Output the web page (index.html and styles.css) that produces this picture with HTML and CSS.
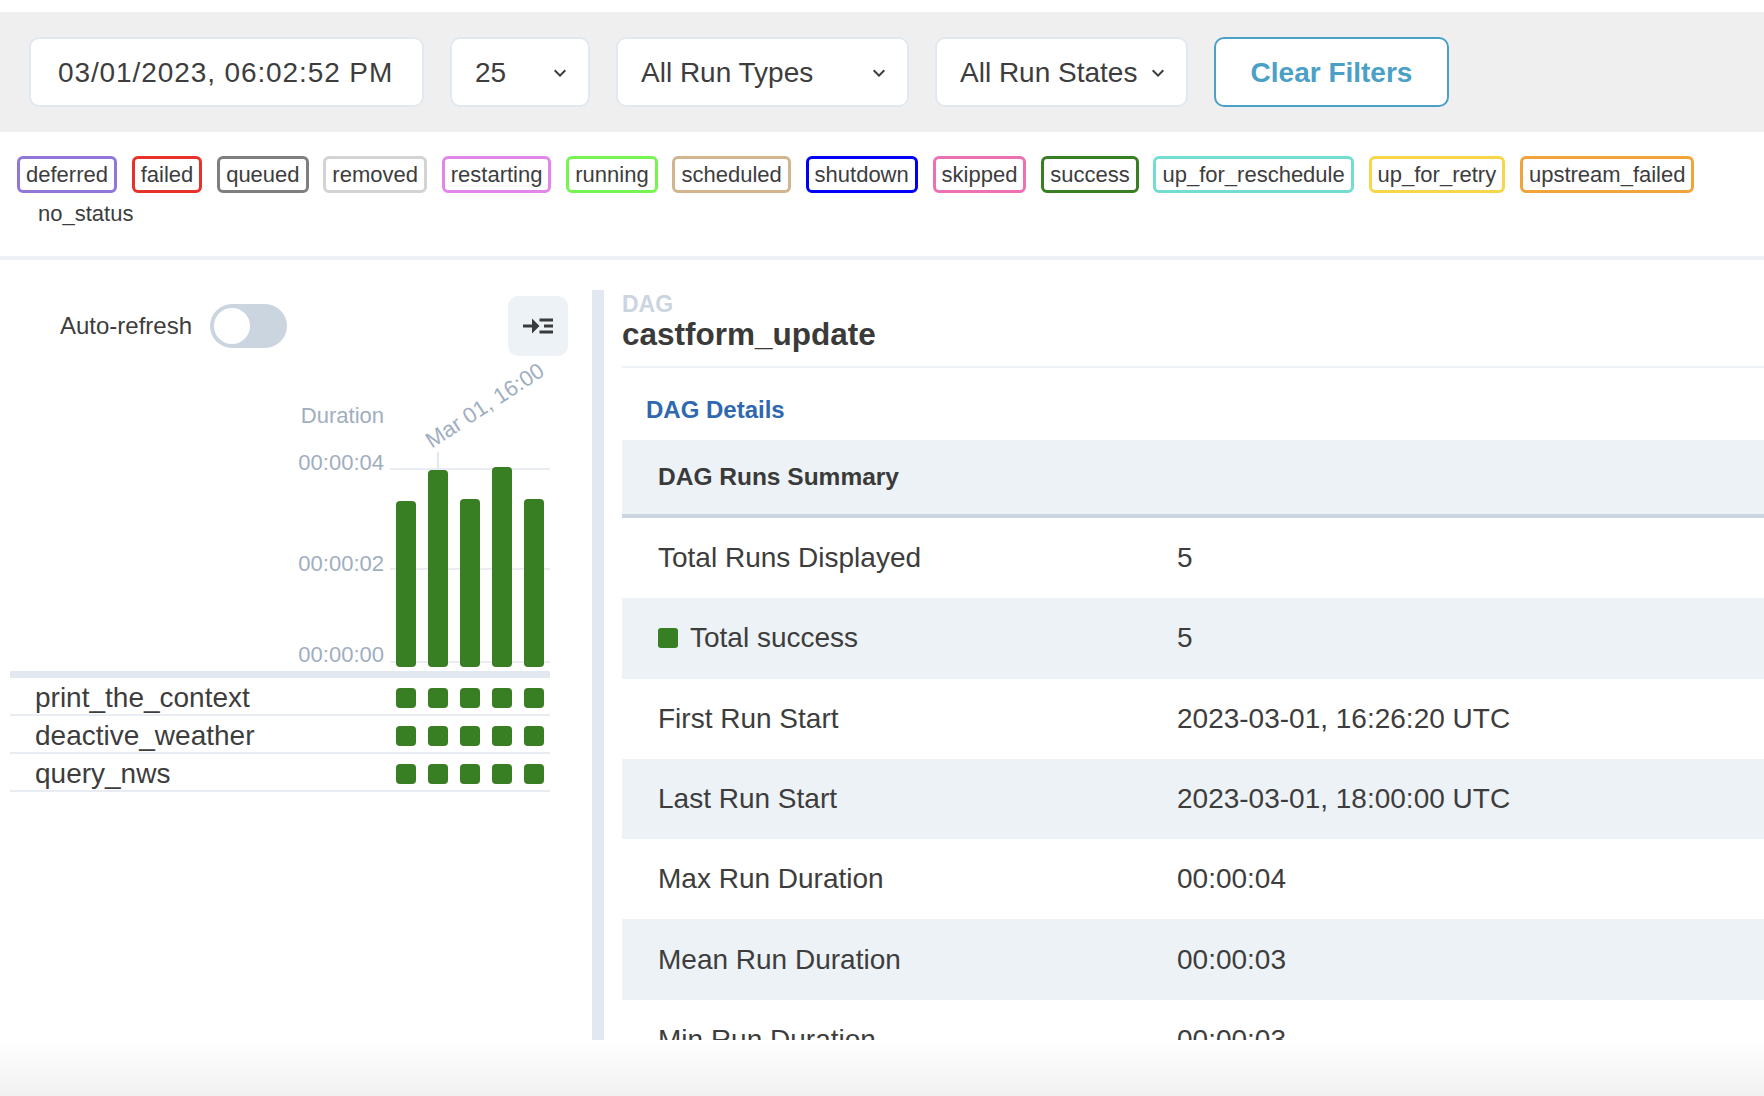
FILE: index.html
```html
<!DOCTYPE html>
<html>
<head>
<meta charset="utf-8">
<title>castform_update - Grid</title>
<link rel="stylesheet" href="styles.css">
</head>
<body>
<div class="topgap"></div>
<div class="filters">
  <div class="field date">03/01/2023, 06:02:52 PM</div>
  <div class="field select w-num"><span>25</span><svg class="chev" viewBox="0 0 24 24" width="24" height="24"><path d="M16.59 8.59L12 13.17 7.41 8.59 6 10l6 6 6-6z"/></svg></div>
  <div class="field select w-types"><span>All Run Types</span><svg class="chev" viewBox="0 0 24 24" width="24" height="24"><path d="M16.59 8.59L12 13.17 7.41 8.59 6 10l6 6 6-6z"/></svg></div>
  <div class="field select w-states"><span>All Run States</span><svg class="chev" viewBox="0 0 24 24" width="24" height="24"><path d="M16.59 8.59L12 13.17 7.41 8.59 6 10l6 6 6-6z"/></svg></div>
  <button class="clear">Clear Filters</button>
</div>

<div class="legend">
  <span class="tag t-deferred">deferred</span>
  <span class="tag t-failed">failed</span>
  <span class="tag t-queued">queued</span>
  <span class="tag t-removed">removed</span>
  <span class="tag t-restarting">restarting</span>
  <span class="tag t-running">running</span>
  <span class="tag t-scheduled">scheduled</span>
  <span class="tag t-shutdown">shutdown</span>
  <span class="tag t-skipped">skipped</span>
  <span class="tag t-success">success</span>
  <span class="tag t-reschedule">up_for_reschedule</span>
  <span class="tag t-retry">up_for_retry</span>
  <span class="tag t-upstream">upstream_failed</span>
  <span class="tag t-nostatus">no_status</span>
</div>

<main class="main">
  <section class="left">
    <div class="refresh-row">
      <div class="refresh">
        <span class="refresh-label">Auto-refresh</span>
        <span class="switch"><span class="knob"></span></span>
      </div>
      <button class="collapse" aria-label="Collapse details">
        <svg viewBox="0 0 24 24" width="36" height="36"><path d="M13 7h9v2h-9zM13 15h9v2h-9zM16 11h6v2h-6zM13 12L8 7v4H2v2h6v4z"/></svg>
      </button>
    </div>

    <div class="chart">
      <div class="axis">
        <div class="axis-title">Duration</div>
        <div class="ytick y4">00:00:04</div>
        <div class="ytick y2">00:00:02</div>
        <div class="ytick y0">00:00:00</div>
      </div>
      <div class="plot">
        <div class="gridline g4"></div>
        <div class="gridline g2"></div>
        <div class="gridline g0"></div>
        <div class="xtick"></div>
        <div class="xlabel">Mar 01, 16:00</div>
        <div class="bar" style="height:166px"></div>
        <div class="bar" style="height:197px"></div>
        <div class="bar" style="height:168px"></div>
        <div class="bar" style="height:200px"></div>
        <div class="bar" style="height:168px"></div>
      </div>
    </div>
    <div class="chart-sep"></div>

    <div class="task-row">
      <span class="task-name">print_the_context</span>
      <span class="cells"><i class="cell"></i><i class="cell"></i><i class="cell"></i><i class="cell"></i><i class="cell"></i></span>
    </div>
    <div class="task-row">
      <span class="task-name">deactive_weather</span>
      <span class="cells"><i class="cell"></i><i class="cell"></i><i class="cell"></i><i class="cell"></i><i class="cell"></i></span>
    </div>
    <div class="task-row">
      <span class="task-name">query_nws</span>
      <span class="cells"><i class="cell"></i><i class="cell"></i><i class="cell"></i><i class="cell"></i><i class="cell"></i></span>
    </div>
  </section>

  <div class="vdivider"></div>

  <section class="right">
    <div class="caption">DAG</div>
    <h1 class="dag-id">castform_update</h1>
    <div class="sep"></div>
    <div class="tabs"><span class="tab">DAG Details</span></div>
    <table class="summary">
      <thead>
        <tr><th colspan="2">DAG Runs Summary</th></tr>
      </thead>
      <tbody>
        <tr><td class="k">Total Runs Displayed</td><td>5</td></tr>
        <tr><td class="k"><span class="swatch"></span>Total success</td><td>5</td></tr>
        <tr><td class="k">First Run Start</td><td>2023-03-01, 16:26:20 UTC</td></tr>
        <tr><td class="k">Last Run Start</td><td>2023-03-01, 18:00:00 UTC</td></tr>
        <tr><td class="k">Max Run Duration</td><td>00:00:04</td></tr>
        <tr><td class="k">Mean Run Duration</td><td>00:00:03</td></tr>
        <tr><td class="k">Min Run Duration</td><td>00:00:03</td></tr>
      </tbody>
    </table>
  </section>
</main>
<div class="footer-fade"></div>
</body>
</html>
```

FILE: styles.css
```css
* { box-sizing: border-box; }

html, body {
  margin: 0;
  padding: 0;
}

body {
  width: 1764px;
  height: 1096px;
  overflow: hidden;
  background: #ffffff;
  color: #3d3d3d;
  font-family: "Liberation Sans", Arial, Helvetica, sans-serif;
}

.topgap { height: 12px; }

/* ---------- filter bar ---------- */
.filters {
  height: 120px;
  background: #efefef;
  padding: 25px 29px;
  display: flex;
  gap: 26px;
}

.field {
  height: 70px;
  background: #ffffff;
  border: 2px solid #e2e8f0;
  border-radius: 10px;
  font-size: 28px;
  color: #3d3d3d;
  display: flex;
  align-items: center;
  padding-top: 2px;
}

.date {
  width: 395px;
  padding-left: 27px;
  letter-spacing: 0.9px;
}

.select {
  justify-content: space-between;
  padding: 2px 16px 0 23px;
}

.w-num { width: 140px; }
.w-types { width: 293px; }
.w-states { width: 253px; }

.chev { fill: #3d3d3d; flex: none; }

.clear {
  width: 235px;
  height: 70px;
  background: #ffffff;
  border: 2px solid #4aa0c6;
  border-radius: 10px;
  color: #4aa0c6;
  font-family: "Liberation Sans", Arial, sans-serif;
  font-weight: bold;
  font-size: 28px;
  padding: 2px 0 0 0;
}

/* ---------- legend ---------- */
.legend {
  display: flex;
  flex-wrap: wrap;
  column-gap: 14.8px;
  row-gap: 2px;
  padding: 24px 17px 24px 17px;
  border-bottom: 4px solid #edf0f5;
}

.tag {
  height: 37px;
  display: inline-flex;
  align-items: center;
  padding: 0 6px;
  border: 3px solid #ffffff;
  border-radius: 6px;
  font-size: 22px;
  color: #3d3d3d;
  white-space: nowrap;
}

.t-deferred { border-color: #9177d8; }
.t-failed { border-color: #e6322a; }
.t-queued { border-color: #7f7f7f; }
.t-removed { border-color: #d3d3d3; }
.t-restarting { border-color: #e287e9; }
.t-running { border-color: #76f552; }
.t-scheduled { border-color: #d2b48e; }
.t-shutdown { border-color: #0000f5; }
.t-skipped { border-color: #ec70b2; }
.t-success { border-color: #387e22; }
.t-reschedule { border-color: #72ddd0; }
.t-retry { border-color: #f8d64a; }
.t-upstream { border-color: #f0a43a; }
.t-nostatus { border-color: #ffffff; margin-left: 12px; }

/* ---------- main ---------- */
.main {
  height: 780px;
  display: flex;
  overflow: hidden;
}

.left {
  width: 568px;
  flex: none;
  padding-left: 10px;
  margin-right: 24px;
}

.refresh-row {
  margin-top: 36px;
  height: 60px;
  display: flex;
  align-items: center;
  justify-content: space-between;
  padding-left: 50px;
}

.refresh {
  display: flex;
  align-items: center;
}

.refresh-label {
  font-size: 24px;
  color: #3d3d3d;
  margin-right: 18px;
}

.switch {
  width: 77px;
  height: 44px;
  border-radius: 22px;
  background: #cbd5e0;
  padding: 4px;
  display: flex;
  align-items: center;
}

.knob {
  width: 36px;
  height: 36px;
  border-radius: 50%;
  background: #ffffff;
}

.collapse {
  width: 60px;
  height: 60px;
  border: none;
  border-radius: 10px;
  background: #edf2f7;
  padding: 0;
  display: flex;
  align-items: center;
  justify-content: center;
}

.collapse svg { fill: #3a3a3a; }

/* chart */
.chart {
  height: 315px;
  display: flex;
}

.axis {
  width: 374px;
  display: flex;
  flex-direction: column;
  align-items: flex-end;
  font-size: 22px;
  line-height: 26px;
  color: #a0aec0;
}

.axis-title { margin-top: 47px; }
.y4 { margin-top: 21px; }
.y2 { margin-top: 75px; }
.y0 { margin-top: 65px; }

.plot {
  position: relative;
  width: 160px;
  margin-left: 6px;
  display: flex;
  align-items: flex-end;
  gap: 12px;
  padding: 0 0 4px 6px;
}

.gridline {
  position: absolute;
  left: 0;
  width: 160px;
  height: 2px;
  background: #e9edf3;
}
.g4 { top: 112px; }
.g2 { top: 212px; }
.g0 { top: 305px; }

.xtick {
  position: absolute;
  left: 47px;
  top: 96px;
  width: 2px;
  height: 17px;
  background: #e2e8f0;
}

.xlabel {
  position: absolute;
  left: 44px;
  top: 74px;
  height: 22px;
  line-height: 22px;
  font-size: 22px;
  color: #a0aec0;
  white-space: nowrap;
  transform-origin: 0 100%;
  transform: rotate(-33deg);
}

.bar {
  position: relative;
  width: 20px;
  border-radius: 4px;
  background: #387e22;
}

.chart-sep {
  width: 540px;
  height: 7px;
  background: #e2e8f0;
}

.task-row {
  width: 540px;
  height: 38px;
  display: flex;
  align-items: center;
  padding-top: 4px;
  border-bottom: 2px solid #e9edf3;
}

.task-name {
  width: 386px;
  padding-left: 25px;
  font-size: 28px;
  color: #3d3d3d;
}

.cells {
  display: flex;
  gap: 12px;
}

.cell {
  width: 20px;
  height: 20px;
  border-radius: 4px;
  background: #387e22;
}

.vdivider {
  width: 12px;
  flex: none;
  margin-top: 30px;
  background: #e2e8f0;
}

/* right */
.right {
  flex: 1;
  min-width: 0;
  margin-left: 18px;
  padding-top: 32px;
}

.caption {
  font-size: 23px;
  font-weight: bold;
  line-height: 25px;
  color: #cbd5e0;
}

.dag-id {
  margin: 0;
  font-size: 31.5px;
  line-height: 35px;
  font-weight: bold;
  color: #3a3a3a;
}

.sep {
  margin-top: 14px;
  height: 2px;
  background: #edf2f7;
}

.tabs {
  padding: 27px 0 15px 24px;
}

.tab {
  display: block;
  font-size: 24px;
  line-height: 30px;
  font-weight: bold;
  color: #2f67b0;
}

.summary {
  width: 100%;
  border-collapse: separate;
  border-spacing: 0;
}

.summary th {
  height: 78px;
  background: #edf2f7;
  border-bottom: 4px solid #cbd5e0;
  text-align: left;
  padding: 0 0 0 36px;
  font-size: 24.5px;
  font-weight: bold;
  color: #3a3a3a;
}

.summary td {
  height: 80.3px;
  padding: 0;
  font-size: 28px;
  color: #3d3d3d;
  vertical-align: middle;
}

.summary td.k {
  width: 555px;
  padding-left: 36px;
}

.summary tbody tr:nth-child(even) td {
  background: #edf2f7;
}

.swatch {
  display: inline-block;
  width: 20px;
  height: 20px;
  border-radius: 3px;
  background: #387e22;
  margin-right: 12px;
  vertical-align: -1px;
}

.footer-fade {
  height: 56px;
  background: linear-gradient(to bottom, #ffffff, #f1f1f1);
}
```
